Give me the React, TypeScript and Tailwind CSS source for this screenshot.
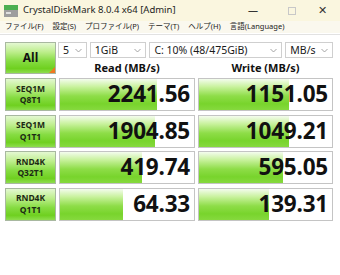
import React from 'react'

const results = [
	{ a: 'SEQ1M', b: 'Q8T1', read: '2241.56', write: '1151.05', rw: 97, ww: 90 },
	{ a: 'SEQ1M', b: 'Q1T1', read: '1904.85', write: '1049.21', rw: 95, ww: 90 },
	{ a: 'RND4K', b: 'Q32T1', read: '419.74', write: '595.05', rw: 82, ww: 84 },
	{ a: 'RND4K', b: 'Q1T1', read: '64.33', write: '139.31', rw: 63, ww: 70 },
]

const menus = ['ファイル(F)', '設定(S)', 'プロファイル(P)', 'テーマ(T)', 'ヘルプ(H)', '言語(Language)']

const greenBtn =
	'bg-[linear-gradient(to_bottom,#e4f8d2_0%,#bdee8c_30%,#86dc42_60%,#6fd020_85%,#8ede4e_100%)] border border-[#a8b8a0]'

function Chevron() {
	return (
		<svg width="7" height="5" viewBox="0 0 7 5" className="shrink-0">
			<path d="M0.5 1 L3.5 4 L6.5 1" fill="none" stroke="#9a9a9a" strokeWidth="0.9" />
		</svg>
	)
}

function Select({ w, label }: { w: string; label: string }) {
	return (
		<div className={`${w} h-[16px] flex items-center justify-between border border-[#cfcfcf] bg-white pl-[4px] pr-[4px]`}>
			<span className="text-[10.5px] leading-none text-[#1a1a1a]">{label}</span>
			<Chevron />
		</div>
	)
}

function ResultCell({ value, width }: { value: string; width: number }) {
	return (
		<div className="relative h-full border border-[#c4c4c4] bg-white">
			<div
				className="absolute left-0 top-0 bottom-0 bg-[linear-gradient(to_bottom,#f4fcee_0%,#c9f29e_25%,#8edd48_55%,#78d42c_80%,#86d93e_100%)]"
				style={{ width }}
			/>
			<div className="relative flex h-full items-center justify-end pr-[4px] text-[22.5px] font-bold leading-none text-[#111] tracking-[-0.2px]">
				{value}
			</div>
		</div>
	)
}

export default function App() {
	return (
		<div
			className="w-[340px] h-[275px] bg-white overflow-hidden"
			style={{ fontFamily: '"Noto Sans", "Noto Sans CJK JP", sans-serif' }}
		>
			{/* title bar */}
			<div className="h-[21px] flex items-center bg-[#faf6df]">
				<svg width="14" height="12" viewBox="0 0 14 12" className="ml-[4px]">
					<rect x="0" y="0" width="14" height="5" fill="#4caf50" />
					<rect x="0" y="5" width="14" height="7" fill="#9e9e9e" />
					<rect x="2" y="7" width="5" height="2" fill="#e0e0e0" />
				</svg>
				<span className="ml-[5px] text-[9.5px] text-[#222]">CrystalDiskMark 8.0.4 x64 [Admin]</span>
				<div className="ml-auto flex items-center pr-[6px] text-[#333]">
					<span className="w-[36px] text-center text-[10px]">—</span>
					<div className="ml-[17px] w-[8px] h-[8px] border border-[#c8c8c8]" />
					<span className="ml-[14px] w-[24px] text-center text-[11px]">✕</span>
				</div>
			</div>
			{/* menu */}
			<div className="h-[12px] flex items-center gap-[9px] pl-[5px] bg-[#faf8ee] text-[7.5px] text-[#222] leading-none">
				{menus.map((m) => (
					<span key={m}>{m}</span>
				))}
			</div>
			<div className="h-px bg-[#e2e2e2] mt-[1px]" />

			<div className="pl-[5px] pt-[7px]">
				<div className="grid grid-cols-[51px_136px_135px] gap-x-[3px]">
					<div className={`relative h-[32px] row-span-2 flex items-center justify-center ${greenBtn}`}>
						<span className="text-[12px] font-bold text-[#111]">All</span>
						<div className="absolute right-0 bottom-0 w-0 h-0 border-l-[6px] border-l-transparent border-b-[6px] border-b-[#f07820]" />
					</div>
					<div className="col-span-2 flex gap-[3px] -ml-px">
						<Select w="w-[29px]" label="5" />
						<Select w="w-[57px]" label="1GiB" />
						<Select w="w-[134px]" label="C: 10% (48/475GiB)" />
						<Select w="w-[48px]" label="MB/s" />
					</div>
					<div className="h-[16px] flex items-end justify-center text-[11px] font-bold text-[#111] leading-none pb-[1px]">
						Read (MB/s)
					</div>
					<div className="h-[16px] flex items-end justify-center text-[11px] font-bold text-[#111] leading-none pb-[1px]">
						Write (MB/s)
					</div>
				</div>

				<div className="mt-[4px] flex flex-col gap-[3.5px]">
					{results.map((r) => (
						<div key={r.a + r.b} className="grid h-[33px] grid-cols-[51px_136px_135px] gap-x-[3px]">
							<div className={`flex flex-col items-center justify-center gap-[3px] ${greenBtn}`}>
								<span className="text-[8.5px] font-bold leading-none text-[#1c2a14]">{r.a}</span>
								<span className="text-[8.5px] font-bold leading-none text-[#1c2a14]">{r.b}</span>
							</div>
							<ResultCell value={r.read} width={r.rw} />
							<ResultCell value={r.write} width={r.ww} />
						</div>
					))}
				</div>
			</div>
		</div>
	)
}
